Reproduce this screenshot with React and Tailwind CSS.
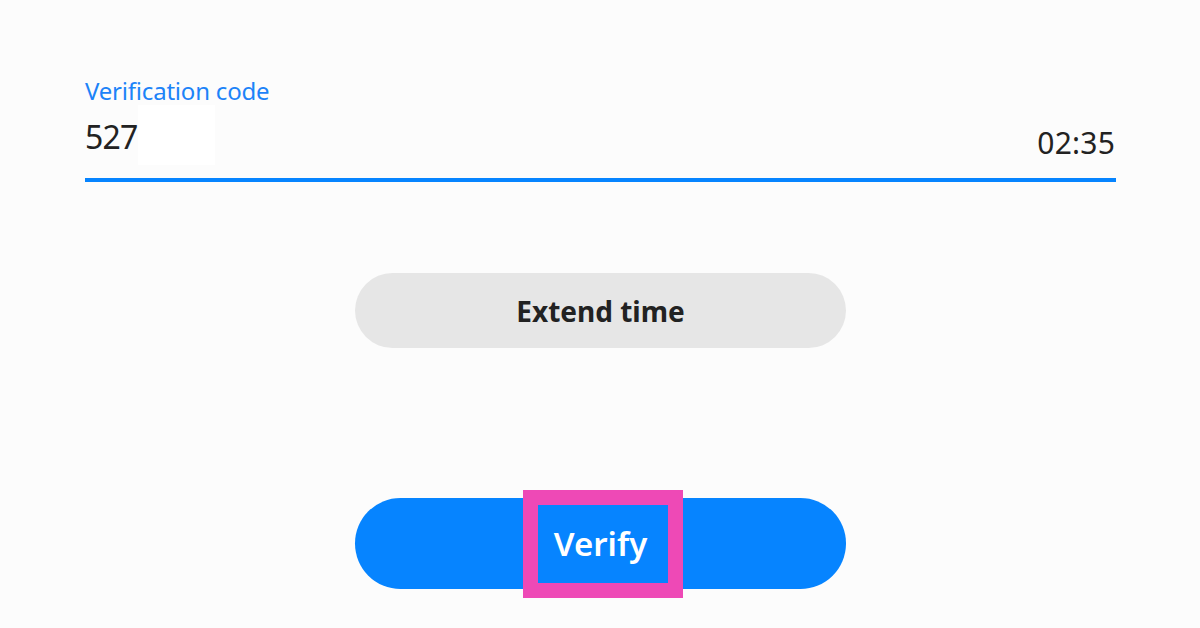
export default function App() {
  return (
    <div
      className="w-full h-[628px] bg-[#fcfcfc] px-[85px] pt-[76px] flex flex-col overflow-hidden"
      style={{ fontFamily: '"Noto Sans", "Open Sans", sans-serif' }}
    >
      <div className="text-[24px] leading-[30px] text-[#1c83f8] tracking-[-0.2px]">Verification code</div>
      <div className="h-[72px] flex justify-between items-end relative">
        <div className="text-[32px] leading-[40px] text-[#222222] mb-[21px] tracking-[-0.8px]">527</div>
        <div className="absolute left-[53px] top-[-1px] w-[77px] h-[60px] bg-white"></div>
        <div className="text-[30px] leading-[40px] text-[#222222] mb-[15px] tracking-[0.2px]">02:35</div>
      </div>
      <div className="h-[4px] bg-[#0684ff] w-[1031px]"></div>
      <div className="flex flex-col items-center w-[1031px]">
        <button className="mt-[91px] w-[491px] h-[75px] rounded-full bg-[#e6e6e6] text-[28px] font-bold text-[#222222] flex items-center justify-center">
          Extend time
        </button>
        <div className="relative mt-[150px]">
          <button className="w-[491px] h-[91px] rounded-full bg-[#0684ff] text-[33px] font-semibold text-white flex items-center justify-center">
            Verify
          </button>
          <div className="absolute left-[168px] top-[-8px] w-[160px] h-[108px] border-[15px] border-[#ee49b6]"></div>
        </div>
      </div>
    </div>
  );
}
